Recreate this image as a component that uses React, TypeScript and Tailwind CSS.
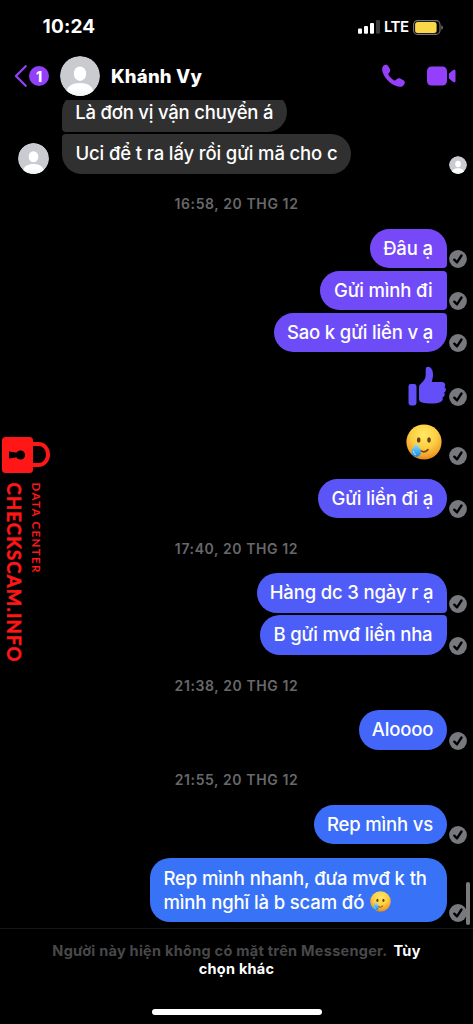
import React from 'react';
import clsx from 'clsx';

interface Message {
  text: string;
  // width, corners, fill and letter spacing of the bubble
  style: string;
}

const Avatar = ({ className }: { className: string }) => (
  <svg viewBox="0 0 40 40" className={clsx('shrink-0 rounded-full', className)}>
    <defs>
      <linearGradient id="person" x1="0" y1="0" x2="0" y2="1">
        <stop offset="0.4" stopColor="#ffffff" />
        <stop offset="1" stopColor="#eeeff2" />
      </linearGradient>
    </defs>
    <circle cx="20" cy="20" r="20" fill="#c9cbd1" />
    <ellipse cx="20" cy="17.7" rx="6.2" ry="7.2" fill="#fff" />
    <path d="M6.5 36C7 30 13 27 20 27s13 3 13.5 9A20 20 0 0 1 20 40 20 20 0 0 1 6.5 36Z" fill="url(#person)" />
  </svg>
);

const SentCheck = () => (
  <svg viewBox="0 0 18 18" className="h-[18px] w-[18px] shrink-0">
    <circle cx="9" cy="9" r="8.9" fill="#77797f" />
    <path d="M5.3 9.7 8 12.3 12.5 5.5" fill="none" stroke="#000" strokeWidth="2.4" strokeLinecap="round" strokeLinejoin="round" />
  </svg>
);

const TearFace = ({ className }: { className: string }) => (
  <svg viewBox="0 0 36 36" className={className} role="img" aria-label="🥲">
    <defs>
      <radialGradient id="face" cx="0.5" cy="0.3" r="0.72">
        <stop offset="0" stopColor="#ffea62" />
        <stop offset="0.5" stopColor="#fccf45" />
        <stop offset="0.82" stopColor="#f2a42c" />
        <stop offset="1" stopColor="#df7d18" />
      </radialGradient>
      <linearGradient id="tear" x1="0" y1="0" x2="0" y2="1">
        <stop offset="0" stopColor="#a4e4ff" />
        <stop offset="0.55" stopColor="#48b4f2" />
        <stop offset="1" stopColor="#2384dc" />
      </linearGradient>
    </defs>
    <circle cx="18" cy="18" r="17.6" fill="url(#face)" />
    <ellipse cx="12.7" cy="16" rx="1.8" ry="2.8" fill="#68391a" />
    <ellipse cx="23" cy="16" rx="1.8" ry="2.8" fill="#68391a" />
    <path d="M13.5 26.2c3.2 2.4 6.3 1.8 8.5-.6" fill="none" stroke="#7b4015" strokeWidth="1.6" strokeLinecap="round" />
    <path d="M10.4 19c1 3.2 4.6 5.5 4.6 9.2a4.7 4.7 0 0 1-9.4 0c0-3.7 3.8-6 4.8-9.2Z" fill="url(#tear)" />
    <path d="M7.6 27.5c0 1.900.8 2.700 1.900 3" fill="none" stroke="#d8f5ff" strokeWidth="0.9" strokeLinecap="round" />
  </svg>
);

const ThumbUp = () => (
  <svg viewBox="0 0 38 40" className="mr-[1px] h-10 w-[38px]" fill="#634ef8">
    <rect x="0.5" y="18" width="8" height="21.5" rx="2.4" />
    <path d="M11 21.5c0-1.800.7-2.800 2-4 3-2.600 4.700-5.300 4.700-8.700V3.300C17.700 1.600 18.700.8 20 .8c3 0 5 3.400 5 7.500 0 3-.7 5.700-1.200 7.700h10c2.200 0 3.400 1.400 3.400 3 0 1-.3 1.700-.8 2.200 1 .6 1.500 1.500 1.500 2.600 0 1.400-.7 2.300-1.800 2.800.4.5.6 1.100.6 1.800 0 1.400-.9 2.500-2.200 2.900.2.400.3.800.3 1.300 0 3.300-3.700 5-11 5-4 0-7.200-.3-9.800-1-2-.5-3-1.500-3-3.500V21.500Z" />
  </svg>
);

const DateLine = ({ children, className }: { children: string; className: string }) => (
  <div className={clsx('pt-[21px] text-center text-[14px] leading-[18px] font-semibold tracking-[0.6px] text-[#68686b]', className)}>
    {children}
  </div>
);

const Sent = ({ text, style }: Message) => (
  <div className="mb-[2.5px] flex h-[39.5px] shrink-0 items-end justify-end gap-[2px] pr-[6.5px]">
    <div className={clsx('flex h-full items-center justify-center pt-[1px] text-[18.5px] font-[540] whitespace-nowrap', style)}>
      {text}
    </div>
    <SentCheck />
  </div>
);

const firstGroup: Message[] = [
  { text: 'Đâu ạ', style: 'w-[77px] rounded-[20px] rounded-br-[4px] bg-[#7648f8] tracking-[-0.15px]' },
  { text: 'Gửi mình đi', style: 'w-[126.5px] rounded-l-[20px] rounded-r-[4px] bg-[#724bf8] tracking-[-0.15px]' },
  { text: 'Sao k gửi liền v ạ', style: 'w-[173px] rounded-[20px] rounded-tr-[4px] bg-[#6d4cf8] tracking-[-0.15px]' },
];

const secondGroup: Message[] = [
  { text: 'Hàng dc 3 ngày r ạ', style: 'w-[190px] rounded-[20px] rounded-br-[4px] bg-[#4f5cf8] tracking-[-0.15px]' },
  { text: 'B gửi mvđ liền nha', style: 'w-[187px] rounded-[20px] rounded-tr-[4px] bg-[#4b5ff8] tracking-[-0.15px]' },
];

const StatusBar = () => (
  <div className="flex h-[54px] items-start justify-between pt-[15px] pr-[30px] pl-[42.5px]">
    <span className="text-[19px] leading-6 font-bold tracking-[0.2px]">10:24</span>
    <div className="flex h-6 items-center">
      <svg viewBox="0 0 22 14" className="mr-[4px] h-[14px] w-[22px]">
        <rect x="0" y="8.5" width="4" height="5.3" rx="1" fill="#fff" />
        <rect x="6" y="6" width="4" height="7.8" rx="1" fill="#fff" />
        <rect x="12" y="3" width="4" height="10.8" rx="1" fill="#fff" />
        <rect x="18" y="0" width="4" height="13.8" rx="1" fill="#3a3a3a" />
      </svg>
      <span className="mr-[5px] w-[24px] pt-[1px] text-[15px] font-semibold tracking-[-0.5px] whitespace-nowrap">LTE</span>
      <svg viewBox="0 0 30 15" className="h-[15px] w-[30px]">
        <rect x="0.6" y="0.6" width="26.4" height="13.8" rx="4" fill="none" stroke="#777" strokeWidth="1.1" />
        <rect x="2.1" y="2.1" width="21.5" height="10.8" rx="2.5" fill="#fbd849" />
        <path d="M28.3 5.2c1.300.5 1.600 1.400 1.600 2.300s-.3 1.800-1.600 2.300Z" fill="#777" />
      </svg>
    </div>
  </div>
);

const ChatHeader = () => (
  <div className="flex h-[44px] items-center pl-[14px]">
    <svg viewBox="0 0 13 22" className="h-[22px] w-[13px]">
      <path d="M11.7 1.3 1.9 11l9.8 9.7" fill="none" stroke="#9440fa" strokeWidth="2.3" strokeLinecap="round" strokeLinejoin="round" />
    </svg>
    <span className="ml-[2px] flex h-5 w-5 items-center justify-center rounded-full bg-[#9440fa] text-[14px] font-extrabold">1</span>
    <Avatar className="ml-[11px] h-10 w-10" />
    <span className="ml-[11px] pt-[1px] text-[18.5px] font-extrabold tracking-[0.2px]">Khánh Vy</span>
    <div className="ml-auto flex items-center pr-[17px]">
      <svg viewBox="0 0 24 24" className="h-6 w-6" fill="#9440fa">
        <path d="M2 2.300C2.900 1.200 4 .8 5 .8c1.100 0 1.900.6 2.500 1.700l1.400 2.600c.6 1.200.4 2.200-.4 3.200L7.600 9.500c-.4.500-.4 1 0 1.600 1.300 2.100 2.900 3.700 5.200 5.100.6.400 1.100.4 1.600 0l1.600-1.300c1-.8 2-.9 3.200-.3l2.800 1.500c1.200.6 1.800 1.400 1.800 2.400 0 1.300-.8 2.500-2 3.400-1.600 1.200-4.100 1.300-6.500.2C8.600 19.300 4.100 14.600 1.900 9 1 6.400.8 3.900 2 2.300Z" />
      </svg>
      <svg viewBox="0 0 30 20" className="ml-[21px] h-5 w-[30px]" fill="#9440fa">
        <rect x="1" y="0.5" width="20" height="19" rx="4.5" />
        <path d="M22.900 8.300c0-.6.2-1 .7-1.400l3.600-2.900c1-.7 2.300-.2 2.300 1v10c0 1.200-1.300 1.700-2.300 1l-3.600-2.900c-.5-.4-.7-.8-.7-1.400Z" />
      </svg>
    </div>
  </div>
);

const Watermark = () => (
  <svg viewBox="0 0 52 230" className="absolute top-[435px] left-0 h-[230px] w-[52px]" fill="#ff1717">
    <rect x="2" y="2" width="31" height="36" rx="3.5" />
    <path d="M33 9h5.500c5.500 0 9.500 4.600 9.500 10.500S44 30 38.500 30H33" fill="none" stroke="#ff1717" strokeWidth="4" />
    <circle cx="20.5" cy="20" r="4.6" fill="#000" />
    <path d="M9 16.5 19 18v4L9 23.500Z" fill="#000" />
    <text
      transform="translate(7.3 47.5) rotate(90)"
      textLength="179"
      stroke="#ff1717"
      strokeWidth="0.5"
      className="font-[Lato,sans-serif] text-[18.5px] font-bold"
    >
      CHECKSCAM.INFO
    </text>
    <text transform="translate(31.5 47.5) rotate(90)" textLength="90" className="font-[Lato,sans-serif] text-[11.5px] font-bold">
      DATA CENTER
    </text>
  </svg>
);

const App = () => {
  return (
    <div className="relative flex h-[1024px] w-[473px] flex-col overflow-hidden bg-black font-[Inter,'Noto_Sans',sans-serif] text-white">
      <header className="h-[100px] shrink-0">
        <StatusBar />
        <ChatHeader />
      </header>

      <main className="flex h-[828px] shrink-0 flex-col overflow-hidden">
        <div className="-mt-2 ml-[62px] flex h-[39.5px] w-[224.5px] shrink-0 items-center justify-center rounded-[20px] rounded-bl-[4px] bg-[#303030] pt-[1.5px] text-[18.5px] font-[540] tracking-[-0.2px] whitespace-nowrap">
          Là đơn vị vận chuyển á
        </div>
        <div className="mt-[2.5px] flex h-[39.5px] shrink-0 items-end pr-[6.5px] pl-[17.5px]">
          <Avatar className="mr-[13.5px] h-[31px] w-[31px]" />
          <div className="flex h-full w-[289px] items-center justify-center rounded-[20px] rounded-tl-[4px] bg-[#303030] pt-[1px] text-[18.5px] font-[540] tracking-[-0.13px] whitespace-nowrap">
            Uci để t ra lấy rồi gửi mã cho c
          </div>
          <Avatar className="ml-auto h-[18px] w-[18px]" />
        </div>

        <DateLine className="h-[55px]">16:58, 20 THG 12</DateLine>
        {firstGroup.map((message) => (
          <Sent key={message.text} {...message} />
        ))}

        <div className="flex h-[51px] shrink-0 items-end justify-end gap-[2px] pr-[6.5px]">
          <ThumbUp />
          <SentCheck />
        </div>
        <div className="mb-[13.5px] flex h-[59.5px] shrink-0 items-end justify-end gap-[7px] pr-[6.5px]">
          <TearFace className="mb-[5px] h-9 w-9" />
          <SentCheck />
        </div>
        <Sent text="Gửi liền đi ạ" style="w-[128.5px] rounded-[20px] bg-[#5b55f8] tracking-[-0.15px]" />

        <DateLine className="-mt-[1.5px] h-[54px]">17:40, 20 THG 12</DateLine>
        {secondGroup.map((message) => (
          <Sent key={message.text} {...message} />
        ))}

        <DateLine className="-mt-[1.5px] h-[54.5px]">21:38, 20 THG 12</DateLine>
        <Sent text="Aloooo" style="w-[88px] rounded-[20px] bg-[#4366f8] tracking-[-0.15px]" />

        <DateLine className="-mt-[2px] h-[54.5px]">21:55, 20 THG 12</DateLine>
        <Sent text="Rep mình vs" style="w-[133px] rounded-[20px] bg-[#3b6df8] tracking-[-0.15px]" />

        <div className="mt-[11px] flex h-16 shrink-0 items-end justify-end gap-[2px] pr-[6.5px]">
          <div className="h-full w-[296.5px] rounded-[20px] bg-[#3873f7] pt-2 pl-[13.5px] text-[18.5px] leading-6 font-[540] tracking-[-0.12px] whitespace-nowrap">
            <p>Rep mình nhanh, đưa mvđ k th</p>
            <p className="flex items-center gap-[6px]">
              mình nghĩ là b scam đó
              <TearFace className="h-[21px] w-[21px]" />
            </p>
          </div>
          <SentCheck />
        </div>
      </main>

      <footer className="flex h-24 flex-col items-center border-t border-[#171717] pt-[13px]">
        <p className="w-[400px] text-center text-[14.5px] leading-[18px] font-bold tracking-[0.27px] text-[#48484a]">
          Người này hiện không có mặt trên Messenger.
          <span className="ml-[6px] text-white">Tùy<br />chọn khác</span>
        </p>
        <div className="mt-auto mb-[9px] h-[6px] w-[170px] rounded-full bg-white" />
      </footer>

      <Watermark />
      <div className="absolute top-[882px] left-[466px] h-[43px] w-[4px] rounded-full bg-[#7b7b7d]" />
    </div>
  );
};

export default App;
